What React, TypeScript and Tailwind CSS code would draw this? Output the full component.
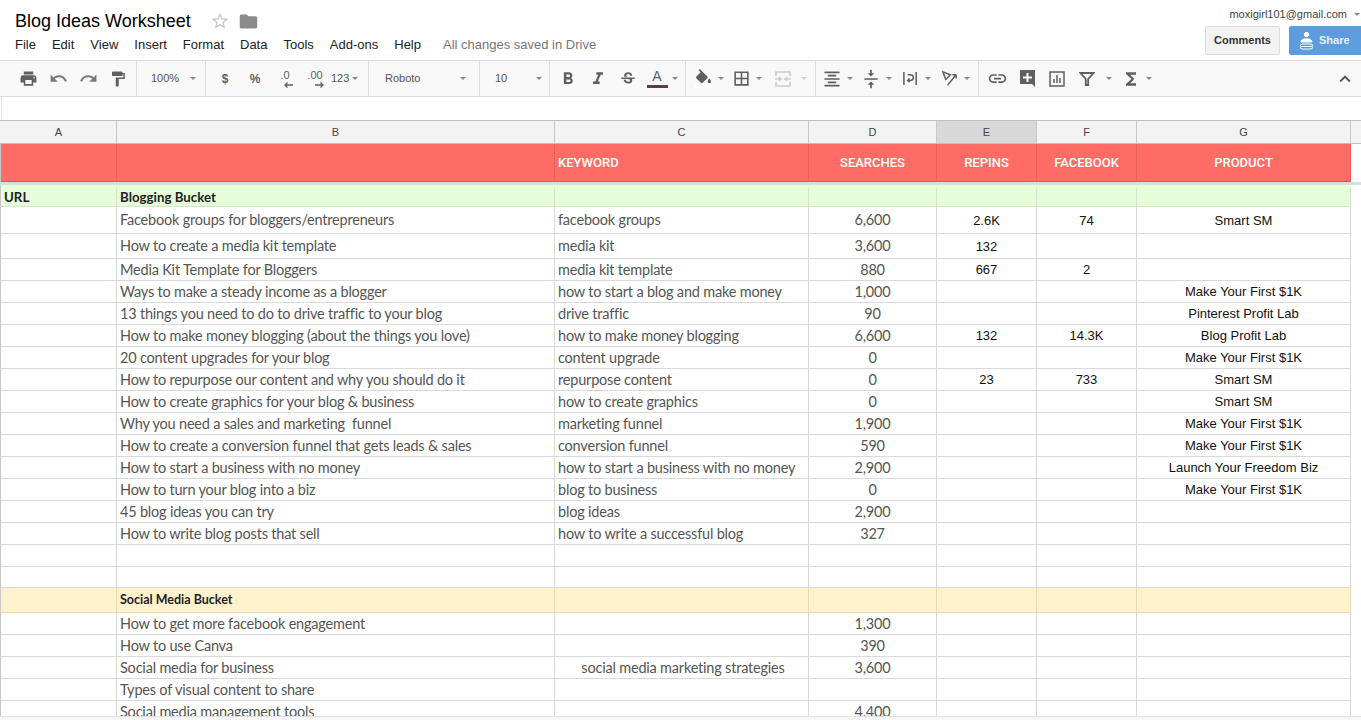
import type { ReactNode } from 'react';
import {
    MdBorderAll,
    MdExpandLess,
    MdFolder,
    MdFormatAlignCenter,
    MdFormatBold,
    MdFormatItalic,
    MdFormatPaint,
    MdFunctions,
    MdInsertLink,
    MdPrint,
    MdRedo,
    MdStarBorder,
    MdStrikethroughS,
    MdUndo,
    MdVerticalAlignCenter,
} from 'react-icons/md';

const COLS = 'grid grid-cols-[116px_438px_254px_128px_100px_100px_214px]';

type Row = {
    h: string;
    b?: string;
    c?: string;
    d?: string;
    e?: string;
    f?: string;
    g?: string;
    centerC?: boolean;
};

const ROWS: Row[] = [
    { h: 'h-[27px]', b: 'Facebook groups for bloggers/entrepreneurs', c: 'facebook groups', d: '6,600', e: '2.6K', f: '74', g: 'Smart SM' },
    { h: 'h-[25px]', b: 'How to create a media kit template', c: 'media kit', d: '3,600', e: '132' },
    { h: 'h-[22px]', b: 'Media Kit Template for Bloggers', c: 'media kit template', d: '880', e: '667', f: '2' },
    { h: 'h-[22px]', b: 'Ways to make a steady income as a blogger', c: 'how to start a blog and make money', d: '1,000', g: 'Make Your First $1K' },
    { h: 'h-[22px]', b: '13 things you need to do to drive traffic to your blog', c: 'drive traffic', d: '90', g: 'Pinterest Profit Lab' },
    { h: 'h-[22px]', b: 'How to make money blogging (about the things you love)', c: 'how to make money blogging', d: '6,600', e: '132', f: '14.3K', g: 'Blog Profit Lab' },
    { h: 'h-[22px]', b: '20 content upgrades for your blog', c: 'content upgrade', d: '0', g: 'Make Your First $1K' },
    { h: 'h-[22px]', b: 'How to repurpose our content and why you should do it', c: 'repurpose content', d: '0', e: '23', f: '733', g: 'Smart SM' },
    { h: 'h-[22px]', b: 'How to create graphics for your blog & business', c: 'how to create graphics', d: '0', g: 'Smart SM' },
    { h: 'h-[22px]', b: 'Why you need a sales and marketing  funnel', c: 'marketing funnel', d: '1,900', g: 'Make Your First $1K' },
    { h: 'h-[22px]', b: 'How to create a conversion funnel that gets leads & sales', c: 'conversion funnel', d: '590', g: 'Make Your First $1K' },
    { h: 'h-[22px]', b: 'How to start a business with no money', c: 'how to start a business with no money', d: '2,900', g: 'Launch Your Freedom Biz' },
    { h: 'h-[22px]', b: 'How to turn your blog into a biz', c: 'blog to business', d: '0', g: 'Make Your First $1K' },
    { h: 'h-[22px]', b: '45 blog ideas you can try', c: 'blog ideas', d: '2,900' },
    { h: 'h-[22px]', b: 'How to write blog posts that sell', c: 'how to write a successful blog', d: '327' },
    { h: 'h-[22px]' },
    { h: 'h-[21px]' },
];

const SOCIAL_ROWS: Row[] = [
    { h: 'h-[22px]', b: 'How to get more facebook engagement', d: '1,300' },
    { h: 'h-[22px]', b: 'How to use Canva', d: '390' },
    { h: 'h-[22px]', b: 'Social media for business', c: 'social media marketing strategies', centerC: true, d: '3,600' },
    { h: 'h-[22px]', b: 'Types of visual content to share' },
    { h: 'h-[22px]', b: 'Social media management tools', d: '4,400' },
];

function Caret({ light = false }: { light?: boolean }) {
    return (
        <span
            className={`inline-block h-0 w-0 border-x-[3px] border-t-[3px] border-x-transparent ${light ? 'border-t-[#d0d0d0]' : 'border-t-[#8a8a8a]'}`}
        />
    );
}

function Tool({ w = 'w-[30px]', children }: { w?: string; children: ReactNode }) {
    return <div className={`flex h-full shrink-0 items-center justify-center text-[#5f5f5f] ${w}`}>{children}</div>;
}

function Group({ w, pl, children }: { w: string; pl: string; children: ReactNode }) {
    return <div className={`flex h-full shrink-0 items-center border-r border-[#dcdcdc] ${w} ${pl}`}>{children}</div>;
}

function DecimalIcon({ label, flip = false }: { label: string; flip?: boolean }) {
    return (
        <span className="flex flex-col items-center text-[11px] leading-[11px]">
            {label}
            <svg
                width="9"
                height="6"
                viewBox="0 0 9 6"
                fill="none"
                stroke="currentColor"
                strokeWidth="1.3"
                className={flip ? 'ml-[8px] mt-[1px]' : 'ml-[6px] mt-[1px] -scale-x-100'}
            >
                <path d="M0 3h8M5.5 0.5L8 3 5.5 5.5" />
            </svg>
        </span>
    );
}

function Toolbar() {
    return (
        <div className="flex h-[37px] items-center border-y border-[#dcdcdc] bg-[#f8f8f8] font-['Liberation_Sans',sans-serif] text-[#555]">
            <Group w="w-[137px]" pl="pl-[13px]">
                <Tool><MdPrint size={19} /></Tool>
                <Tool><MdUndo size={19} className="text-[#777]" /></Tool>
                <Tool><MdRedo size={19} className="text-[#777]" /></Tool>
                <Tool><MdFormatPaint size={18} /></Tool>
            </Group>
            <Group w="w-[69px]" pl="pl-[14px]">
                <span className="text-[11px]">100%</span>
                <span className="ml-[11px] flex"><Caret /></span>
            </Group>
            <Group w="w-[163px]" pl="pl-[4px]">
                <Tool><span className="text-[12px] font-bold">$</span></Tool>
                <Tool><span className="text-[12px] font-bold">%</span></Tool>
                <Tool><DecimalIcon label=".0" /></Tool>
                <Tool><DecimalIcon label=".00" flip /></Tool>
                <div className="flex w-[34px] items-center gap-[3px] pl-[1px]">
                    <span className="text-[11px]">123</span>
                    <Caret />
                </div>
            </Group>
            <Group w="w-[111px]" pl="pl-[16px]">
                <span className="text-[11px] font-medium">Roboto</span>
                <span className="ml-[40px] flex"><Caret /></span>
            </Group>
            <Group w="w-[70px]" pl="pl-[15px]">
                <span className="text-[11px]">10</span>
                <span className="ml-[29px] flex"><Caret /></span>
            </Group>
            <Group w="w-[136px]" pl="pl-[3px]">
                <Tool><MdFormatBold size={20} /></Tool>
                <Tool><MdFormatItalic size={20} /></Tool>
                <Tool><MdStrikethroughS size={18} /></Tool>
                <Tool w="w-[28px]">
                    <span className="flex flex-col items-center text-[14px] leading-[14px]">
                        A
                        <span className="mt-[2px] h-[3px] w-[21px] bg-[#5b3f3f]" />
                    </span>
                </Tool>
                <span className="ml-[1px] flex"><Caret /></span>
            </Group>
            <Group w="w-[130px]" pl="pl-[6px]">
                <Tool w="w-[22px]">
                    <span className="flex flex-col items-center">
                        <svg width="17" height="15" viewBox="2 0 20 18" fill="currentColor">
                            <path d="M16.56 8.94L7.62 0 6.21 1.41l2.38 2.38-5.15 5.15c-.59.59-.59 1.54 0 2.12l5.5 5.5c.29.29.68.44 1.06.44s.77-.15 1.06-.44l5.5-5.5c.59-.58.59-1.53 0-2.11zM19 11.5s-2 2.17-2 3.5c0 1.1.9 2 2 2s2-.9 2-2c0-1.33-2-3.5-2-3.5z" />
                        </svg>
                        <span className="mt-[1px] h-[3px] w-[17px] bg-white" />
                    </span>
                </Tool>
                <span className="ml-[4px] flex"><Caret /></span>
                <Tool w="w-[34px]"><MdBorderAll size={19} /></Tool>
                <span className="ml-[-2px] flex"><Caret /></span>
                <Tool w="w-[42px]">
                    <svg width="18" height="18" viewBox="0 0 18 18" fill="none" stroke="#c9cec9" strokeWidth="1.6">
                        <path d="M2 6V2h14v4M2 12v4h14v-4M1 9h6M5 7l2 2-2 2M17 9h-6M13 7l-2 2 2 2" />
                    </svg>
                </Tool>
                <span className="ml-[-3px] flex"><Caret light /></span>
            </Group>
            <Group w="w-[163px]" pl="pl-[4px]">
                <Tool w="w-[24px]"><MdFormatAlignCenter size={20} /></Tool>
                <span className="ml-[3px] flex"><Caret /></span>
                <Tool w="w-[36px]"><MdVerticalAlignCenter size={20} /></Tool>
                <span className="ml-[-3px] flex"><Caret /></span>
                <Tool w="w-[36px]">
                    <svg width="17" height="17" viewBox="0 0 18 18" fill="none" stroke="currentColor" strokeWidth="1.6">
                        <path d="M2 2v14M15 2v14M6 5h3a2.5 2.5 0 0 1 0 6H6M8 9l-2 2 2 2" />
                    </svg>
                </Tool>
                <span className="ml-[-3px] flex"><Caret /></span>
                <Tool w="w-[36px]">
                    <svg width="17" height="17" viewBox="0 0 18 18" fill="none" stroke="currentColor" strokeWidth="1.6">
                        <path d="M2 2l8 3-5 5zM7 16L16 5M16 5h-4M16 5v4" />
                    </svg>
                </Tool>
                <span className="ml-[-3px] flex"><Caret /></span>
            </Group>
            <div className="flex h-full flex-1 items-center pl-[3px]">
                <Tool><MdInsertLink size={21} /></Tool>
                <Tool>
                    <svg width="17" height="17" viewBox="0 0 17 17" fill="currentColor">
                        <path fillRule="evenodd" d="M1 0h15v17l-3-3H1zM7.5 3v3.5H4v2h3.5V12h2V8.5H13v-2H9.5V3z" />
                    </svg>
                </Tool>
                <Tool>
                    <svg width="16" height="16" viewBox="0 0 16 16" fill="none" stroke="currentColor" strokeWidth="1.5">
                        <path d="M1 1h14v14H1zM5 12V8M8 12V4M11 12V7" />
                    </svg>
                </Tool>
                <Tool>
                    <svg width="16" height="16" viewBox="0 0 16 16" fill="none" stroke="currentColor" strokeWidth="1.8">
                        <path d="M1.5 2h13L9.2 8v6H6.8V8z" />
                    </svg>
                </Tool>
                <span className="ml-[4px] flex"><Caret /></span>
                <Tool w="w-[38px]"><MdFunctions size={20} /></Tool>
                <span className="ml-[-4px] flex"><Caret /></span>
                <div className="ml-auto mr-[5px] flex"><MdExpandLess size={22} /></div>
            </div>
        </div>
    );
}

function Header() {
    return (
        <header className="flex h-[60px] justify-between bg-white font-['Liberation_Sans',sans-serif]">
            <div className="pl-[15px]">
                <div className="flex h-[37px] items-center pt-[5px]">
                    <h1 className="text-[18px] leading-none text-black">Blog Ideas Worksheet</h1>
                    <MdStarBorder size={20} className="ml-[19px] text-[#c8c8c8]" />
                    <MdFolder size={21} className="ml-[8px] text-[#8a8a8a]" />
                </div>
                <nav className="flex items-center gap-4 text-[13px] leading-[15px] text-[#222]">
                    <span>File</span>
                    <span>Edit</span>
                    <span>View</span>
                    <span>Insert</span>
                    <span>Format</span>
                    <span>Data</span>
                    <span>Tools</span>
                    <span>Add-ons</span>
                    <span>Help</span>
                    <span className="ml-[6px] text-[#777]">All changes saved in Drive</span>
                </nav>
            </div>
            <div className="flex flex-col items-end">
                <div className="mt-[8px] flex items-center gap-[7px] pr-[1px] text-[11px] leading-[13px] text-[#444]">
                    moxigirl101@gmail.com
                    <Caret />
                </div>
                <div className="mt-[5px] flex gap-[9px]">
                    <div className="flex h-[29px] w-[75px] items-center justify-center rounded-[2px] border border-[#dcdcdc] bg-[#f3f3f3] text-[11px] font-bold text-[#333]">
                        Comments
                    </div>
                    <div className="flex h-[29px] w-[72px] items-center gap-[6px] rounded-l-[2px] bg-[#5d9cdf] pl-[11px] text-[11px] font-bold text-[#e8f1fb]">
                        <svg width="13" height="18" viewBox="0 0 13 18" fill="none" stroke="white">
                            <circle cx="6.5" cy="2.5" r="2.2" fill="white" />
                            <path d="M1 10c0-2.2 2.5-3.2 5.5-3.2s5.5 1 5.500 3.2z" fill="white" />
                            <path d="M2.500 12h8a1.800 1.800 0 0 1 0 5h-8a1.800 1.800 0 0 1 0-5zM1 14.500h11" />
                        </svg>
                        Share
                    </div>
                </div>
            </div>
        </header>
    );
}

function ColumnHeaders() {
    const cols: [string, boolean][] = [['A', false], ['B', false], ['C', false], ['D', false], ['E', true], ['F', false], ['G', false]];
    return (
        <div className={`${COLS} h-[24px] border-y border-[#c0c0c0] bg-[#f3f3f3] pl-px font-['Liberation_Sans',sans-serif] text-[11px] text-[#444]`}>
            {cols.map(([label, active]) => (
                <div
                    key={label}
                    className={`flex items-center justify-center border-r border-[#c8c8c8] ${active ? 'bg-[#d8d8d8]' : ''}`}
                >
                    {label}
                </div>
            ))}
        </div>
    );
}

function SheetRow({ row }: { row: Row }) {
    const cell = 'flex items-center overflow-hidden whitespace-pre border-r border-[#d9d9d9]';
    const lato = "font-['Lato',sans-serif] text-[14.5px] tracking-[-0.2px] text-[#555]";
    const arial = "justify-center pt-[1px] font-['Liberation_Sans',sans-serif] text-[13px] text-[#111]";
    return (
        <div className={`${COLS} ${row.h} border-b border-[#d9d9d9]`}>
            <div className={cell} />
            <div className={`${cell} ${lato} pl-[3px]`}>{row.b}</div>
            <div className={`${cell} ${lato} pl-[3px] ${row.centerC ? 'justify-center' : ''}`}>{row.c}</div>
            <div className={`${cell} ${lato} justify-center`}>{row.d}</div>
            <div className={`${cell} ${arial}`}>{row.e}</div>
            <div className={`${cell} ${arial}`}>{row.f}</div>
            <div className={`${cell} ${arial}`}>{row.g}</div>
        </div>
    );
}

function BucketRow({ url, title, style, line }: { url?: string; title: string; style: string; line: string }) {
    const cell = `flex items-center border-r ${line}`;
    return (
        <div className={`${COLS} border-b ${line} ${style} font-['Lato',sans-serif] font-bold text-[#222]`}>
            <div className={`${cell} pl-[3px]`}>{url}</div>
            <div className={`${cell} pl-[3px]`}>{title}</div>
            <div className={cell} />
            <div className={cell} />
            <div className={cell} />
            <div className={cell} />
            <div className={cell} />
        </div>
    );
}

export default function App() {
    const heads = ['', '', 'KEYWORD', 'SEARCHES', 'REPINS', 'FACEBOOK', 'PRODUCT'];
    return (
        <main className="h-[720px] w-[1361px] overflow-hidden bg-white">
            <Header />
            <Toolbar />
            <div className="h-[23px] bg-white">
                <div className="ml-px h-full w-px bg-[#e4e4e4]" />
            </div>
            <ColumnHeaders />
            <div className="h-[572px] overflow-hidden">
                <div className="w-[1351px] border-l border-[#c8c8c8]">
                    <div className={`${COLS} h-[38px] border-b border-[#e2564e] bg-[#ff6c65] pt-[1px] font-['Roboto',sans-serif] text-[13px] font-medium text-white`}>
                        {heads.map((label, i) => (
                            <div
                                key={i}
                                className={`flex items-center border-r border-[#e5615a] ${i === 2 ? 'pl-[3px]' : 'justify-center'}`}
                            >
                                {label}
                            </div>
                        ))}
                    </div>
                    <div className="ml-[-1px] h-[3px] w-[1361px] bg-[#d9dde3]" />
                    <BucketRow url="URL" title="Blogging Bucket" style="h-[22px] bg-[#e6fdd9] pt-[3px] text-[13.3px]" line="border-[#d5e3cc]" />
                    {ROWS.map((row, i) => <SheetRow key={i} row={row} />)}
                    <BucketRow title="Social Media Bucket" style="h-[25px] bg-[#fff2cc] text-[12.5px]" line="border-[#e8dbb0]" />
                    {SOCIAL_ROWS.map((row, i) => <SheetRow key={i} row={row} />)}
                </div>
            </div>
            <div className="h-[4px] border-t border-[#e0e0e0] bg-[#f6f6f6]" />
        </main>
    );
}
